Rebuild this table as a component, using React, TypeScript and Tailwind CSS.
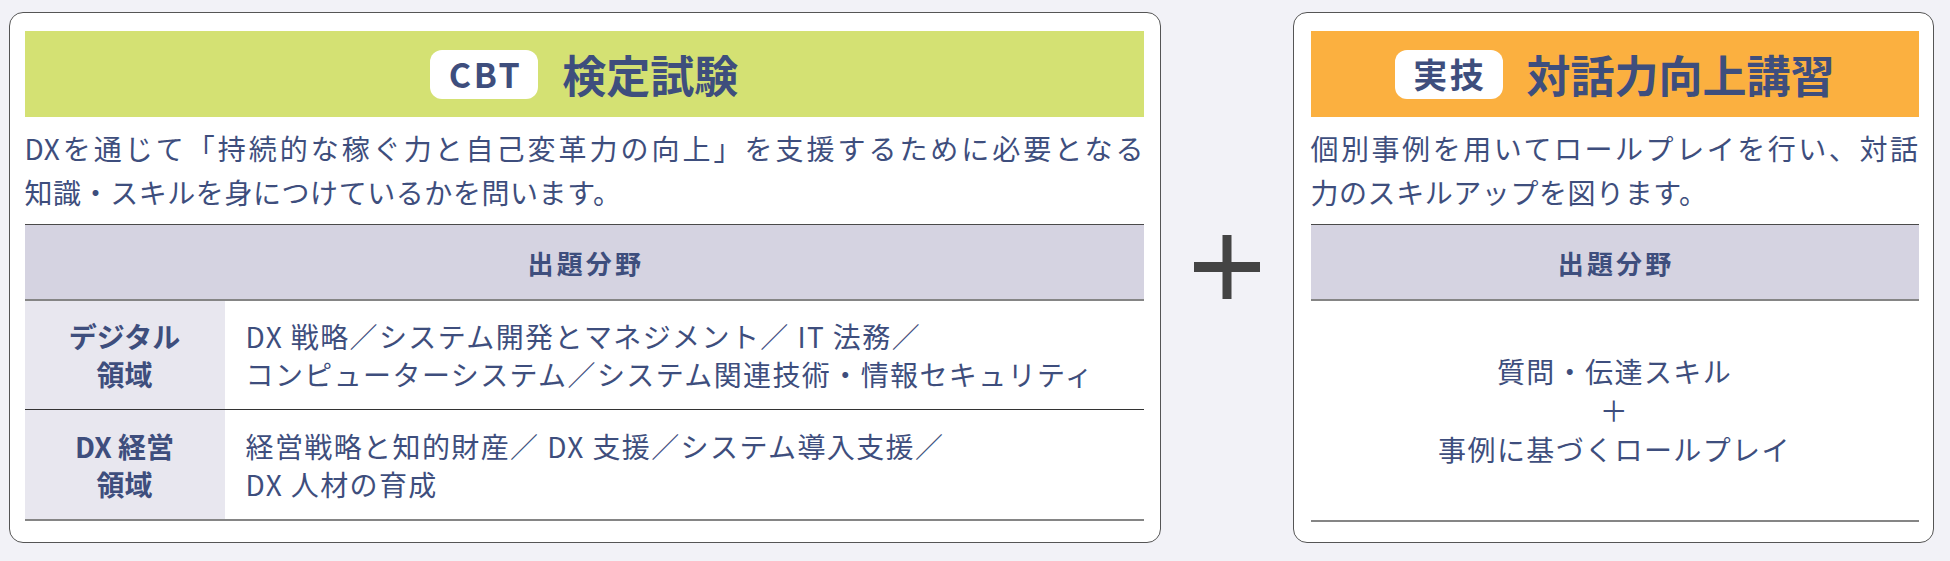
type Row = {
  label: string[];
  lines: string[];
};

const rows: Row[] = [
  {
    label: ["デジタル", "領域"],
    lines: [
      "DX 戦略／システム開発とマネジメント／ IT 法務／",
      "コンピューターシステム／システム関連技術・情報セキュリティ",
    ],
  },
  {
    label: ["DX 経営", "領域"],
    lines: ["経営戦略と知的財産／ DX 支援／システム導入支援／", "DX 人材の育成"],
  },
];

function Header({ badge, title, color }: { badge: string; title: string; color: string }) {
  return (
    <div className={`h-[86px] ${color} flex items-center justify-center gap-[24px]`}>
      <span className="w-[108px] h-[49px] rounded-[12px] bg-white flex items-center justify-center text-[34px] font-bold leading-none tracking-[0.08em] pl-[0.08em]">
        {badge}
      </span>
      <h2 className="text-[44px] font-bold leading-none">{title}</h2>
    </div>
  );
}

function Description({ first, second }: { first: string; second: string }) {
  return (
    <div className="mt-[9px] text-[28px] leading-[44px] tracking-[0.02em]">
      <p className="text-justify [text-align-last:justify] whitespace-nowrap">{first}</p>
      <p>{second}</p>
    </div>
  );
}

function TableHead() {
  return (
    <div className="h-[76px] bg-[#d5d3e1] border-b-2 border-[#858585] flex items-center justify-center text-[26px] font-bold tracking-[0.12em] pl-[0.12em]">
      出題分野
    </div>
  );
}

export default function App() {
  return (
    <div className="w-[1950px] h-[561px] bg-[#f2f2f7] pt-[12px] pl-[9px] font-['Noto_Sans_CJK_JP',sans-serif] text-[#3e4e7d]">
      <div className="flex items-start">
        {/* CBT card */}
        <section className="w-[1152px] h-[531px] rounded-[14px] border-[1.5px] border-[#555] bg-white pt-[18px] pl-[14.5px] pr-[16px]">
          <Header badge="CBT" title="検定試験" color="bg-[#d4e173]" />
          <Description
            first="DXを通じて「持続的な稼ぐ力と自己変革力の向上」を支援するために必要となる"
            second="知識・スキルを身につけているかを問います。"
          />
          <div className="mt-[10px] border-t-[1.5px] border-[#4a4a4a] border-b-2 border-b-[#858585]">
            <TableHead />
            {rows.map((row, i) => (
              <div
                key={i}
                className={`flex h-[109px] ${i === 0 ? "border-b border-[#333]" : ""}`}
              >
                <div className="w-[200px] bg-[#e8e7ef] flex flex-col items-center justify-center text-[28px] leading-[38px] font-bold">
                  {row.label.map((l) => (
                    <span key={l}>{l}</span>
                  ))}
                </div>
                <div className="flex-1 flex flex-col justify-center pl-[21px] text-[28px] leading-[38px] tracking-[0.05em]">
                  {row.lines.map((l) => (
                    <span key={l}>{l}</span>
                  ))}
                </div>
              </div>
            ))}
          </div>
        </section>

        {/* plus */}
        <div className="w-[132px] flex justify-center pt-[223px]">
          <svg width="66" height="64" viewBox="0 0 66 64">
            <rect x="0" y="27" width="66" height="10" fill="#444" />
            <rect x="28.5" y="0" width="9" height="64" fill="#444" />
          </svg>
        </div>

        {/* 実技 card */}
        <section className="w-[641px] h-[531px] rounded-[14px] border-[1.5px] border-[#555] bg-white pt-[18px] pl-[16.5px] pr-[14.5px]">
          <Header badge="実技" title="対話力向上講習" color="bg-[#fbb040]" />
          <Description
            first="個別事例を用いてロールプレイを行い、対話"
            second="力のスキルアップを図ります。"
          />
          <div className="mt-[10px] border-t-[1.5px] border-[#4a4a4a] border-b-2 border-b-[#858585]">
            <TableHead />
            <div className="h-[219px] flex flex-col items-center justify-center text-center text-[28px] leading-[39px] tracking-[0.05em]">
              <span>質問・伝達スキル</span>
              <span>＋</span>
              <span>事例に基づくロールプレイ</span>
            </div>
          </div>
        </section>
      </div>
    </div>
  );
}
